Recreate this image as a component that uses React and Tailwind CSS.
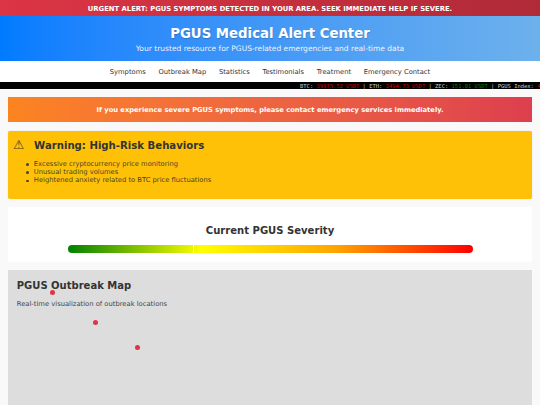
/**
 * App.jsx
 * PGUS Medical Alert Center landing page.
 */
import React from 'react';

const navItems = ['Symptoms', 'Outbreak Map', 'Statistics', 'Testimonials', 'Treatment', 'Emergency Contact'];

const prices = [
  { label: 'BTC', value: '39975.52 USDT', color: 'text-[#d80000]' },
  { label: 'ETH', value: '2494.73 USDT', color: 'text-[#d80000]' },
  { label: 'ZEC', value: '151.01 USDT', color: 'text-[#008000]' },
  { label: 'PGUS Index', value: '4', color: 'text-[#d80000]' },
];

const behaviors = [
  'Excessive cryptocurrency price monitoring',
  'Unusual trading volumes',
  'Heightened anxiety related to BTC price fluctuations',
];

const outbreaks = [
  { id: 1, left: 42, top: 20.4 },
  { id: 2, left: 84.2, top: 50 },
  { id: 3, left: 126.4, top: 75.3 },
];

function Ticker() {
  return (
    <div className="flex h-[6.75px] items-center bg-black pt-[2px] pl-[300px] font-['DejaVu_Sans_Mono',monospace] text-[5.48px] leading-none whitespace-pre text-[#ccc]">
      {prices.map((p, i) => (
        <span key={p.label}>
          {i > 0 && ' | '}
          {p.label}: <span className={p.color}>{p.value}</span>
        </span>
      ))}
    </div>
  );
}

export default function App() {
  return (
    <div className="flex h-[405px] w-full flex-col overflow-hidden bg-[#f9f9f9] font-['DejaVu_Sans',sans-serif] text-[6.75px] text-[#333] *:shrink-0">
      <div className="flex h-[16px] items-center justify-center bg-linear-to-r from-[#dc3545] to-[#b02a37] pt-[2px] text-[6.82px] font-bold text-white">
        URGENT ALERT: PGUS SYMPTOMS DETECTED IN YOUR AREA. SEEK IMMEDIATE HELP IF SEVERE.
      </div>

      <header className="h-[45px] bg-linear-to-r from-[#007bff] to-[#6db1ec] pt-[9.5px] text-center text-white">
        <h1 className="text-[13.3px] leading-[16px] font-bold [text-shadow:0.5px_0.5px_1px_rgba(0,0,0,0.2)]">
          PGUS Medical Alert Center
        </h1>
        <p className="mt-[2px] text-[7.52px] leading-[9px] opacity-90">
          Your trusted resource for PGUS-related emergencies and real-time data
        </p>
      </header>

      <nav className="flex h-[21px] items-center justify-center gap-[12.7px] bg-white pt-[1.5px]">
        {navItems.map((item) => (
          <a key={item} href="#">{item}</a>
        ))}
      </nav>

      <Ticker />

      <main className="flex flex-col gap-[8.4px] px-[8.4px] pt-[8.4px]">
        <div className="flex h-[25px] items-center justify-center bg-linear-to-r from-[#fd7e14] to-[#dc3545] text-[6.73px] font-bold text-white opacity-95">
          If you experience severe PGUS symptoms, please contact emergency services immediately.
        </div>

        <section className="h-[68.2px] rounded-[2px] bg-[#ffc107] pt-[8px] pl-[4.5px] shadow-[0_0_1px_rgba(0,0,0,0.2)]">
          <div className="flex h-[14px] items-center">
            <span className="w-[21.2px] text-[12.6px] leading-none opacity-90">⚠</span>
            <h2 className="text-[10.15px] font-bold">Warning: High-Risk Behaviors</h2>
          </div>
          <ul className="mt-[7.4px] pl-[13.6px] leading-[8.1px] opacity-90">
            {behaviors.map((b) => (
              <li key={b} className="flex items-center gap-[5.2px]">
                <span className="mt-[1px] size-[2.2px] rounded-full bg-[#333]" />
                {b}
              </li>
            ))}
          </ul>
        </section>

        <section className="flex h-[54.5px] flex-col items-center rounded-[2px] bg-white pt-[18px]">
          <h2 className="text-[10.05px] leading-[12px] font-bold">Current PGUS Severity</h2>
          <div className="mt-[7.4px] h-[8.6px] w-[405px] rounded-full bg-[linear-gradient(to_right,green,yellow_33%,orange_66%,red)] pl-[125.6px]">
            <div className="h-full w-[1px] bg-white" />
          </div>
        </section>

        <section className="relative h-[211px] bg-[#ddd] px-[8.4px] pt-[9.6px]">
          <h2 className="text-[10px] leading-[12px] font-bold">PGUS Outbreak Map</h2>
          <p className="mt-[8.4px] text-[6.77px] leading-[9px] opacity-90">Real-time visualization of outbreak locations</p>
          {outbreaks.map((o) => (
            <span
              key={o.id}
              className="absolute size-[5px] rounded-full bg-[#dc3545]"
              style={{ left: o.left, top: o.top }}
            />
          ))}
        </section>
      </main>
    </div>
  );
}
